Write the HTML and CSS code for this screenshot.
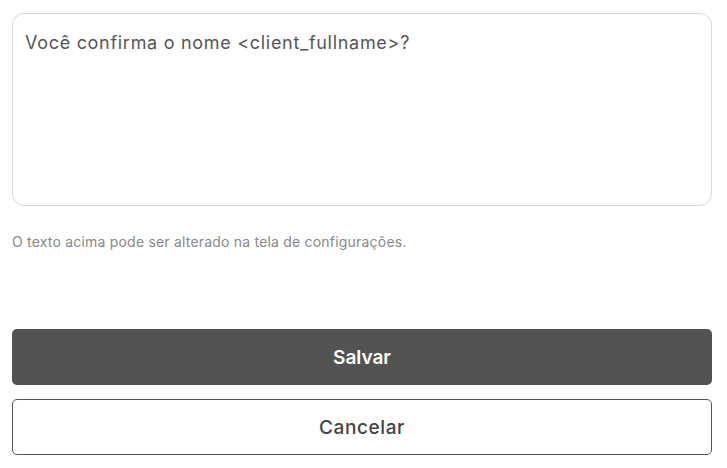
FILE: index.html
```html
<!DOCTYPE html>
<html lang="pt-BR">
<head>
<meta charset="utf-8">
<link rel="stylesheet" href="styles.css">
</head>
<body>
<div class="panel">
  <div class="message">Você confirma o nome &lt;client_fullname&gt;?</div>
  <p class="hint">O texto acima pode ser alterado na tela de configurações.</p>
  <div class="actions">
    <button class="btn btn-primary">Salvar</button>
    <button class="btn btn-secondary">Cancelar</button>
  </div>
</div>
</body>
</html>
```
FILE: styles.css
```css
html, body {
  margin: 0;
  padding: 0;
  background: #fff;
}
body {
  font-family: Inter, "Noto Sans", sans-serif;
}
.panel {
  width: 700px;
  padding: 13px 0 0 12px;
  display: flex;
  flex-direction: column;
}
.message {
  box-sizing: border-box;
  height: 193px;
  border: 1px solid #d6d6d6;
  border-radius: 12px;
  padding: 16px 12px;
  font-size: 18px;
  line-height: 26px;
  color: #555;
  letter-spacing: 0.7px;
}
.hint {
  margin: 26px 0 0 0;
  font-size: 14px;
  line-height: 20px;
  color: #888;
  letter-spacing: 0.2px;
}
.actions {
  margin-top: 77px;
  display: flex;
  flex-direction: column;
  gap: 14px;
}
.btn {
  box-sizing: border-box;
  height: 56px;
  width: 100%;
  border-radius: 5px;
  font-family: Inter, "Noto Sans", sans-serif;
  font-size: 19px;
  cursor: pointer;
}
.btn-primary {
  background: #535353;
  border: none;
  color: #fff;
  font-weight: 600;
}
.btn-secondary {
  background: #fff;
  border: 1px solid #555;
  color: #444;
  font-weight: 500;
  letter-spacing: 0.6px;
}
```
